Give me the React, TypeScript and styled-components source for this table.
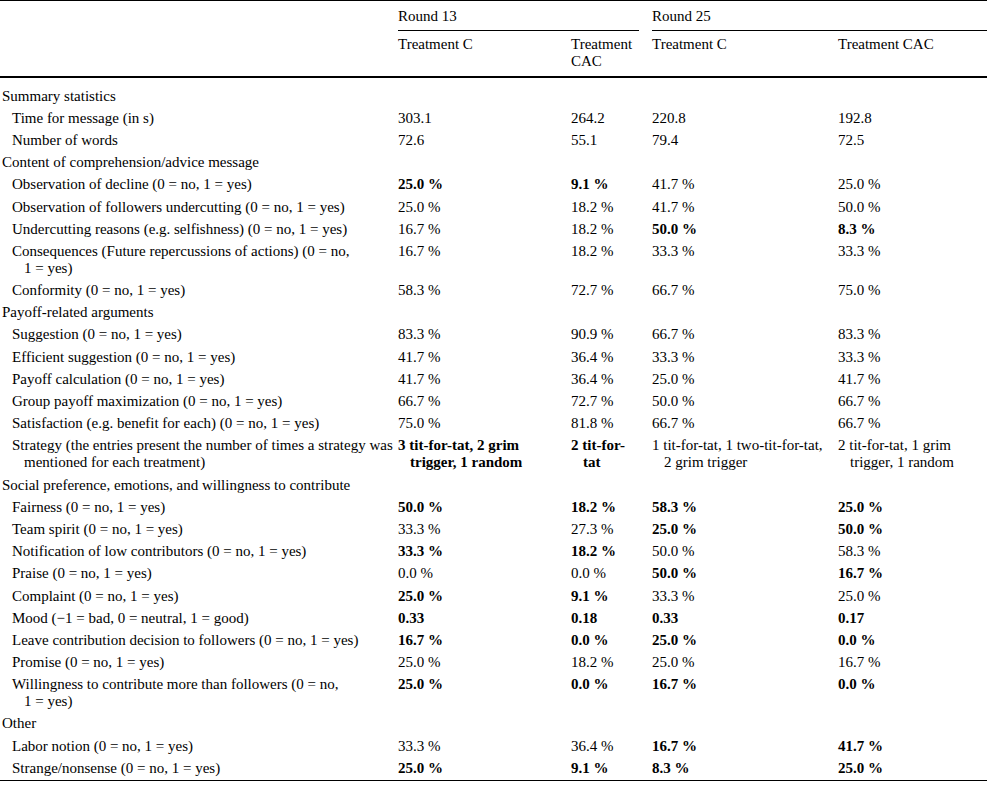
import React from "react";
import styled, { createGlobalStyle } from "styled-components";

const GlobalStyle = createGlobalStyle`
  html, body {
    margin: 0;
    padding: 0;
    background: #ffffff;
  }
  body {
    font-family: "Liberation Serif", "Times New Roman", serif;
    font-size: 15px;
    color: #000000;
  }
`;

const COLS = "398px 173px 81px 186px 149px";

const Table = styled.div`
  width: 987px;
  font-family: "Liberation Serif", "Times New Roman", serif;
  font-size: 15px;
  line-height: 17px;
  color: #000;
`;

const HeadTop = styled.div`
  display: grid;
  grid-template-columns: 398px 254px 335px;
  border-top: 1px solid #000;
`;

const GroupLabel = styled.div<{ $gap: number }>`
  margin-right: ${(p) => p.$gap}px;
  padding: 7px 0 5px;
  border-bottom: 1px solid #000;
`;

const HeadSub = styled.div`
  display: grid;
  grid-template-columns: ${COLS};
  padding: 5px 0 6px;
  border-bottom: 2px solid #000;
`;

const HeadCell = styled.div<{ $pr: number }>`
  padding-right: ${(p) => p.$pr}px;
`;

const Body = styled.div`
  padding: 7px 0 1px;
  border-bottom: 1px solid #000;
`;

const SectionTitle = styled.div`
  padding: 2.6px 0 2.6px 2px;
`;

const Row = styled.div`
  display: grid;
  grid-template-columns: ${COLS};
`;

const Label = styled.div`
  padding: 2.6px 4px 2.6px 24px;
  text-indent: -12px;
  white-space: pre-line;
`;

const Value = styled.div<{ $bold?: boolean; $pr: number }>`
  padding: 2.6px ${(p) => p.$pr}px 2.6px 12px;
  text-indent: -12px;
  font-weight: ${(p) => (p.$bold ? 700 : 400)};
`;

type Cell = string | { b: string };
type RowData = [string, Cell, Cell, Cell, Cell];
type Section = { title: string; rows: RowData[] };

const b = (s: string) => ({ b: s });

const PADS = [12, 14, 12, 0];

const sections: Section[] = [
  {
    title: "Summary statistics",
    rows: [
      ["Time for message (in s)", "303.1", "264.2", "220.8", "192.8"],
      ["Number of words", "72.6", "55.1", "79.4", "72.5"],
    ],
  },
  {
    title: "Content of comprehension/advice message",
    rows: [
      ["Observation of decline (0 = no, 1 = yes)", b("25.0 %"), b("9.1 %"), "41.7 %", "25.0 %"],
      ["Observation of followers undercutting (0 = no, 1 = yes)", "25.0 %", "18.2 %", "41.7 %", "50.0 %"],
      ["Undercutting reasons (e.g. selfishness) (0 = no, 1 = yes)", "16.7 %", "18.2 %", b("50.0 %"), b("8.3 %")],
      ["Consequences (Future repercussions of actions) (0 = no,\n1 = yes)", "16.7 %", "18.2 %", "33.3 %", "33.3 %"],
      ["Conformity (0 = no, 1 = yes)", "58.3 %", "72.7 %", "66.7 %", "75.0 %"],
    ],
  },
  {
    title: "Payoff-related arguments",
    rows: [
      ["Suggestion (0 = no, 1 = yes)", "83.3 %", "90.9 %", "66.7 %", "83.3 %"],
      ["Efficient suggestion (0 = no, 1 = yes)", "41.7 %", "36.4 %", "33.3 %", "33.3 %"],
      ["Payoff calculation (0 = no, 1 = yes)", "41.7 %", "36.4 %", "25.0 %", "41.7 %"],
      ["Group payoff maximization (0 = no, 1 = yes)", "66.7 %", "72.7 %", "50.0 %", "66.7 %"],
      ["Satisfaction (e.g. benefit for each) (0 = no, 1 = yes)", "75.0 %", "81.8 %", "66.7 %", "66.7 %"],
      [
        "Strategy (the entries present the number of times a strategy was\nmentioned for each treatment)",
        b("3 tit-for-tat, 2 grim trigger, 1 random"),
        b("2 tit-for-tat"),
        "1 tit-for-tat, 1 two-tit-for-tat, 2 grim trigger",
        "2 tit-for-tat, 1 grim trigger, 1 random",
      ],
    ],
  },
  {
    title: "Social preference, emotions, and willingness to contribute",
    rows: [
      ["Fairness (0 = no, 1 = yes)", b("50.0 %"), b("18.2 %"), b("58.3 %"), b("25.0 %")],
      ["Team spirit (0 = no, 1 = yes)", "33.3 %", "27.3 %", b("25.0 %"), b("50.0 %")],
      ["Notification of low contributors (0 = no, 1 = yes)", b("33.3 %"), b("18.2 %"), "50.0 %", "58.3 %"],
      ["Praise (0 = no, 1 = yes)", "0.0 %", "0.0 %", b("50.0 %"), b("16.7 %")],
      ["Complaint (0 = no, 1 = yes)", b("25.0 %"), b("9.1 %"), "33.3 %", "25.0 %"],
      ["Mood (\u22121 = bad, 0 = neutral, 1 = good)", b("0.33"), b("0.18"), b("0.33"), b("0.17")],
      ["Leave contribution decision to followers (0 = no, 1 = yes)", b("16.7 %"), b("0.0 %"), b("25.0 %"), b("0.0 %")],
      ["Promise (0 = no, 1 = yes)", "25.0 %", "18.2 %", "25.0 %", "16.7 %"],
      ["Willingness to contribute more than followers (0 = no,\n1 = yes)", b("25.0 %"), b("0.0 %"), b("16.7 %"), b("0.0 %")],
    ],
  },
  {
    title: "Other",
    rows: [
      ["Labor notion (0 = no, 1 = yes)", "33.3 %", "36.4 %", b("16.7 %"), b("41.7 %")],
      ["Strange/nonsense (0 = no, 1 = yes)", b("25.0 %"), b("9.1 %"), b("8.3 %"), b("25.0 %")],
    ],
  },
];

export default function App() {
  return (
    <>
      <GlobalStyle />
      <Table>
        <HeadTop>
          <div />
          <GroupLabel $gap={13}>Round 13</GroupLabel>
          <GroupLabel $gap={0}>Round 25</GroupLabel>
        </HeadTop>
        <HeadSub>
          <div />
          <HeadCell $pr={12}>Treatment C</HeadCell>
          <HeadCell $pr={14}>Treatment CAC</HeadCell>
          <HeadCell $pr={12}>Treatment C</HeadCell>
          <HeadCell $pr={0}>Treatment CAC</HeadCell>
        </HeadSub>
        <Body>
          {sections.map((s) => (
            <React.Fragment key={s.title}>
              <SectionTitle>{s.title}</SectionTitle>
              {s.rows.map((r) => (
                <Row key={r[0]}>
                  <Label>{r[0]}</Label>
                  {r.slice(1).map((c, i) => {
                    const cell = c as Cell;
                    const bold = typeof cell !== "string";
                    const text = typeof cell === "string" ? cell : cell.b;
                    return (
                      <Value key={i} $bold={bold} $pr={PADS[i]}>
                        {text}
                      </Value>
                    );
                  })}
                </Row>
              ))}
            </React.Fragment>
          ))}
        </Body>
      </Table>
    </>
  );
}
